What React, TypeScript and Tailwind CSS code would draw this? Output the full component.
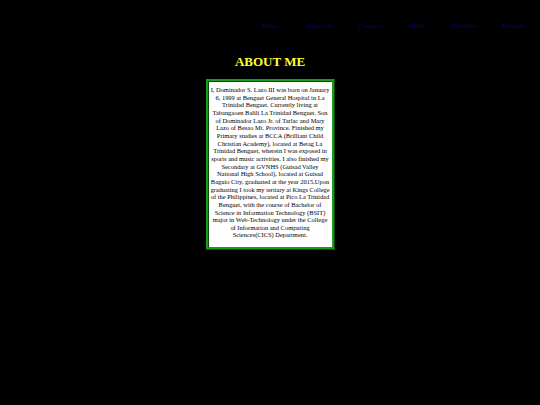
const links = ['Home', 'About me', 'Contacts', 'Skills', 'Portfolio', 'Resume'];

const lines = [
  'I, Dominador S. Lazo III was born on January',
  '6, 1999 at Benguet General Hospital in La',
  'Trinidad Benguet. Currently living at',
  'Tabangaoen Balili La Trinidad Benguet. Son',
  'of Dominador Lazo Jr. of Tarlac and Mary',
  'Lazo of Besao Mt. Province. Finished my',
  'Primary studies at BCCA (Brilliant Child',
  'Christian Academy), located at Betag La',
  'Trinidad Benguet, wherein I was exposed in',
  'sports and music activities. I also finished my',
  'Secondary at GVNHS (Guisad Valley',
  'National High School), located at Guisad',
  'Baguio City, graduated at the year 2015.Upon',
  'graduating I took my tertiary at Kings College',
  'of the Philippines, located at Pico La Trinidad',
  'Benguet, with the course of Bachelor of',
  'Science in Information Technology (BSIT)',
  'major in Web-Technology under the College',
  'of Information and Computing',
  'Sciences(CICS) Department.',
];

export default function App() {
  return (
    <div
      className="w-[540px] h-[405px] bg-black flex flex-col"
      style={{ fontFamily: "'Liberation Serif', 'Times New Roman', serif" }}
    >
      {/* Nav */}
      <nav className="flex justify-end gap-[26px] pr-[15px] pt-[22px] text-[7px] leading-[9px]">
        {links.map((l) => (
          <a key={l} href="#" className="text-[#000080]">
            {l}
          </a>
        ))}
      </nav>

      <h1 className="mt-[23px] text-center text-[13px] leading-[15px] font-bold text-[#ffff33]">
        ABOUT ME
      </h1>

      <div
        className="mx-auto mt-[10px] w-[129px] border-[3px] border-[#1a9a1a] bg-white pt-[4px] pb-[8px]"
        style={{ borderStyle: 'ridge' }}
      >
        <p className="text-center text-[6.45px] leading-[7.65px] text-black whitespace-nowrap">
          {lines.map((t, i) => (
            <span key={i}>
              {t}
              {i < lines.length - 1 && <br />}
            </span>
          ))}
        </p>
      </div>
    </div>
  );
}
